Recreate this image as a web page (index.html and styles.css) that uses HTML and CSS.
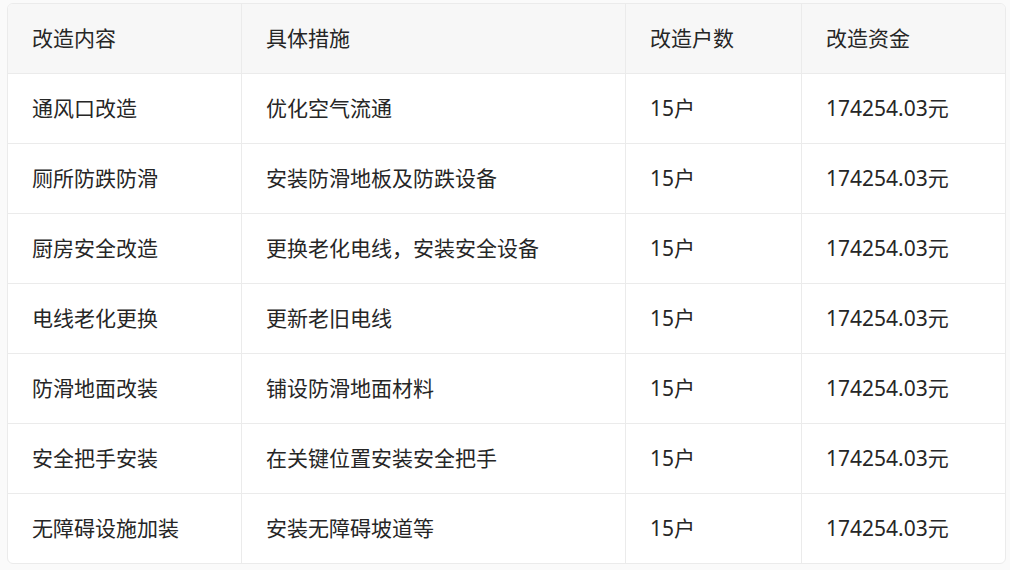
FILE: index.html
```html
<!DOCTYPE html>
<html lang="zh-CN">
<head>
<meta charset="utf-8">
<title>改造清单</title>
<link rel="stylesheet" href="styles.css">
</head>
<body>
<div class="table-wrap">
  <div class="grid" role="table">
    <div class="cell head">改造内容</div>
    <div class="cell head">具体措施</div>
    <div class="cell head">改造户数</div>
    <div class="cell head last-col">改造资金</div>

    <div class="cell">通风口改造</div>
    <div class="cell">优化空气流通</div>
    <div class="cell">15户</div>
    <div class="cell last-col">174254.03元</div>

    <div class="cell">厕所防跌防滑</div>
    <div class="cell">安装防滑地板及防跌设备</div>
    <div class="cell">15户</div>
    <div class="cell last-col">174254.03元</div>

    <div class="cell">厨房安全改造</div>
    <div class="cell">更换老化电线，安装安全设备</div>
    <div class="cell">15户</div>
    <div class="cell last-col">174254.03元</div>

    <div class="cell">电线老化更换</div>
    <div class="cell">更新老旧电线</div>
    <div class="cell">15户</div>
    <div class="cell last-col">174254.03元</div>

    <div class="cell">防滑地面改装</div>
    <div class="cell">铺设防滑地面材料</div>
    <div class="cell">15户</div>
    <div class="cell last-col">174254.03元</div>

    <div class="cell">安全把手安装</div>
    <div class="cell">在关键位置安装安全把手</div>
    <div class="cell">15户</div>
    <div class="cell last-col">174254.03元</div>

    <div class="cell last-row">无障碍设施加装</div>
    <div class="cell last-row">安装无障碍坡道等</div>
    <div class="cell last-row">15户</div>
    <div class="cell last-row last-col">174254.03元</div>
  </div>
</div>
</body>
</html>
```

FILE: styles.css
```css
html, body {
  margin: 0;
  padding: 0;
  background: #fafafa;
}
body {
  padding: 3px 0 0 7px;
  font-family: "Noto Sans", "Noto Sans CJK SC", sans-serif;
  font-size: 21px;
  color: #262626;
}
.table-wrap {
  width: 999px;
  box-sizing: border-box;
  border: 1px solid #ebebeb;
  border-radius: 6px;
  background: #ffffff;
  overflow: hidden;
}
.grid {
  display: grid;
  grid-template-columns: 234px 384px 176px 203px;
}
.cell {
  box-sizing: border-box;
  height: 70px;
  padding: 0 0 0 24px;
  display: flex;
  align-items: center;
  border-right: 1px solid #ebebeb;
  border-bottom: 1px solid #ebebeb;
  white-space: nowrap;
  line-height: 1;
}
.head {
  background: #f7f7f7;
}
.last-col {
  border-right: none;
}
.last-row {
  border-bottom: none;
  height: 69px;
}
```
